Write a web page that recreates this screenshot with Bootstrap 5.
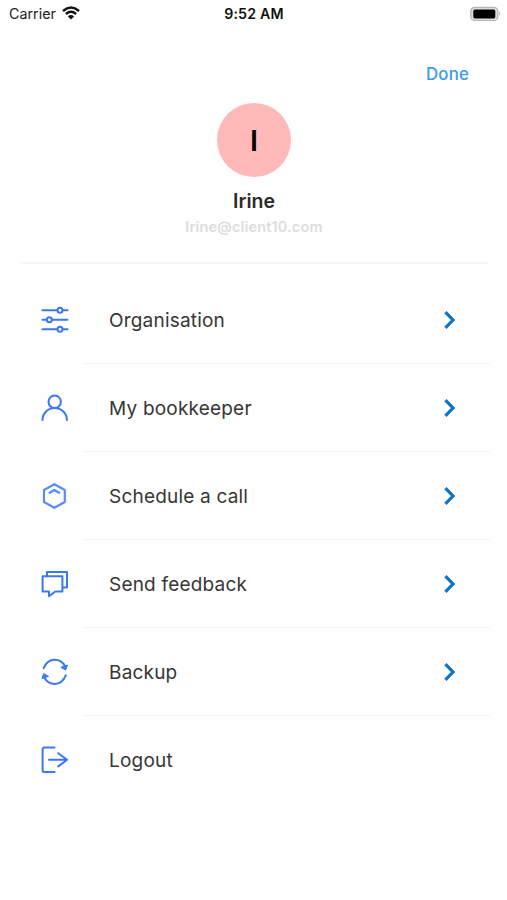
<!DOCTYPE html>
<html lang="en">
<head>
<meta charset="utf-8">
<meta name="viewport" content="width=device-width, initial-scale=1">
<title>Profile</title>
<link href="https://cdn.jsdelivr.net/npm/bootstrap@5.3.0/dist/css/bootstrap.min.css" rel="stylesheet">
<style>
body { font-family: Inter, "Liberation Sans", sans-serif; background: #fefefe; color: #363636; min-height: 900px; overflow: hidden; }
svg { display: block; flex: none; }
.status-bar { height: 28px; padding: 0 7px 0 9px; color: #222; }
.carrier { font-size: 14.3px; line-height: 28px; }
.clock { font-size: 14.2px; font-weight: 600; line-height: 28px; color: #111; letter-spacing: .2px; margin-left: -1px; }
.wifi { margin-left: 6px; margin-top: -2px; }
.battery { margin-right: -1px; margin-top: -1px; }
.top-actions { height: 75px; padding: 35px 38px 0 0; }
.done-link { font-size: 16.8px; line-height: 22px; font-weight: 500; color: #3b9aeb; letter-spacing: .2px; }
.profile { height: 161px; margin: 0 19px 0 20px; border-bottom: 2px solid #f5f5f5; }
.avatar { width: 74px; height: 74px; background: #ffb9b9; color: #000; font-size: 29px; font-weight: 600; }
.avatar span { padding-top: 2px; }
.person { font-size: 19.5px; line-height: 24px; font-weight: 600; color: #2b2b2b; margin-top: 12px; }
.email { font-size: 14.5px; line-height: 20px; font-weight: 600; color: #dcdddd; letter-spacing: .16px; margin-top: 4px; }
.menu { padding: 12px 17px 0 41px; }
.menu-row { height: 88px; color: inherit; text-decoration: none; }
.menu-icon { width: 43px; fill: none; stroke: #3b78f0; }
.menu-icon svg { stroke-width: 2; stroke-linecap: round; stroke-linejoin: round; }
.menu-label { font-size: 19px; letter-spacing: .2px; padding: 0 33px 0 25px; border-bottom: 1px solid #f2f2f2; }
.menu-label span { padding-top: 3px; }
.menu-row:last-child .menu-label { border-bottom-color: transparent; }
.chevron { fill: none; stroke: #0f74c8; stroke-width: 3.2; }
</style>
<script src="https://cdn.jsdelivr.net/npm/bootstrap@5.3.0/dist/js/bootstrap.bundle.min.js" defer></script>
</head>
<body>
<header>
  <div class="status-bar row g-0 align-items-center">
    <div class="col d-flex align-items-center">
      <span class="carrier">Carrier</span>
      <svg class="wifi" width="18" height="14" viewBox="0 0 18 14" fill="none" stroke="#111" stroke-width="2.4"><path d="M1 5Q9-1.8 17 5M3.9 8Q9 3.7 14.1 8"/><path d="M9 13.5 5.9 10.4Q9 7.8 12.1 10.4Z" fill="#111" stroke="none"/></svg>
    </div>
    <div class="col-auto clock">9:52 AM</div>
    <div class="col d-flex justify-content-end">
      <svg class="battery" width="31" height="16" viewBox="0 0 31 16"><rect x=".8" y="1.3" width="27" height="13.2" rx="4" fill="#ddd" stroke="#b5b5b5" stroke-width="1.2"/><rect x="3.3" y="3.6" width="22" height="8.8" rx="1.6" fill="#000"/><path d="M29 5.6Q31 7.8 29 10Z" fill="#aaa"/></svg>
    </div>
  </div>
  <div class="top-actions d-flex justify-content-end">
    <a class="done-link text-decoration-none" href="#">Done</a>
  </div>
</header>
<section class="profile d-flex flex-column align-items-center">
  <div class="avatar rounded-circle d-flex align-items-center justify-content-center"><span>I</span></div>
  <div class="person">Irine</div>
  <div class="email">Irine@client10.com</div>
</section>
<nav class="menu d-flex flex-column">
  <a class="menu-row d-flex" href="#">
    <span class="menu-icon d-flex align-items-center"><svg width="28" height="28" viewBox="0 0 28 28"><path d="M1.5 4.3h14.8M21.6 4.3h4.9M1.5 13.8h4.2M11 13.8h15.5M1.5 23.3h14.8M21.6 23.3h4.9"/><circle cx="19" cy="4.3" r="2.5"/><circle cx="8.4" cy="13.8" r="2.5"/><circle cx="19" cy="23.3" r="2.5"/></svg></span>
    <span class="menu-label flex-grow-1 d-flex align-items-center justify-content-between"><span>Organisation</span><svg class="chevron" width="14" height="20" viewBox="0 0 14 20"><path d="M2.4 2.2 10 10 2.4 17.8"/></svg></span>
  </a>
  <a class="menu-row d-flex" href="#">
    <span class="menu-icon d-flex align-items-center"><svg width="28" height="28" viewBox="0 0 28 28"><circle cx="13.7" cy="7.8" r="6.2"/><path d="M1.5 26a12.2 12 0 0 1 24.4 0"/></svg></span>
    <span class="menu-label flex-grow-1 d-flex align-items-center justify-content-between"><span>My bookkeeper</span><svg class="chevron" width="14" height="20" viewBox="0 0 14 20"><path d="M2.4 2.2 10 10 2.4 17.8"/></svg></span>
  </a>
  <a class="menu-row d-flex" href="#">
    <span class="menu-icon d-flex align-items-center"><svg width="28" height="28" viewBox="0 0 28 28" stroke="#5a8df0"><path stroke-width="2.2" d="M13.4 2.2 23.8 8v12L13.4 25.8 3 20V8Z"/><path stroke-width="2.2" d="M8.6 10.8 13.4 8l4.8 2.8"/></svg></span>
    <span class="menu-label flex-grow-1 d-flex align-items-center justify-content-between"><span>Schedule a call</span><svg class="chevron" width="14" height="20" viewBox="0 0 14 20"><path d="M2.4 2.2 10 10 2.4 17.8"/></svg></span>
  </a>
  <a class="menu-row d-flex" href="#">
    <span class="menu-icon d-flex align-items-center"><svg width="28" height="28" viewBox="0 0 28 28"><path d="M1.6 6.3h19.8v15.2H14.3L8 26.2v-4.7H1.6Z"/><path d="M6 6.3V1.9h20v15.5h-4.2"/></svg></span>
    <span class="menu-label flex-grow-1 d-flex align-items-center justify-content-between"><span>Send feedback</span><svg class="chevron" width="14" height="20" viewBox="0 0 14 20"><path d="M2.4 2.2 10 10 2.4 17.8"/></svg></span>
  </a>
  <a class="menu-row d-flex" href="#">
    <span class="menu-icon d-flex align-items-center"><svg width="28" height="28" viewBox="0 0 28 28"><path d="M2.6 10.2C4.8 4.8 9 1.7 13.7 1.7c4.3 0 8 2.2 10.2 6.2M24.8 17.4C22.6 22.8 18.4 25.9 13.7 25.9c-4.3 0-8-2.2-10.2-6.2"/><path fill="#3b78f0" stroke-width="1" d="M20.2 9.2 26.5 7 24.8 11.8ZM7.2 18.4.9 20.6 2.6 15.8Z"/></svg></span>
    <span class="menu-label flex-grow-1 d-flex align-items-center justify-content-between"><span>Backup</span><svg class="chevron" width="14" height="20" viewBox="0 0 14 20"><path d="M2.4 2.2 10 10 2.4 17.8"/></svg></span>
  </a>
  <a class="menu-row d-flex" href="#">
    <span class="menu-icon d-flex align-items-center"><svg width="28" height="28" viewBox="0 0 28 28"><path d="M13.5 1.6h-10Q1.6 1.6 1.6 3.4v20.8Q1.6 26 3.4 26h10.1M8 13.8h18M17.2 7.2l8.9 6.6-8.9 6.6"/></svg></span>
    <span class="menu-label flex-grow-1 d-flex align-items-center"><span>Logout</span></span>
  </a>
</nav>
</body>
</html>
